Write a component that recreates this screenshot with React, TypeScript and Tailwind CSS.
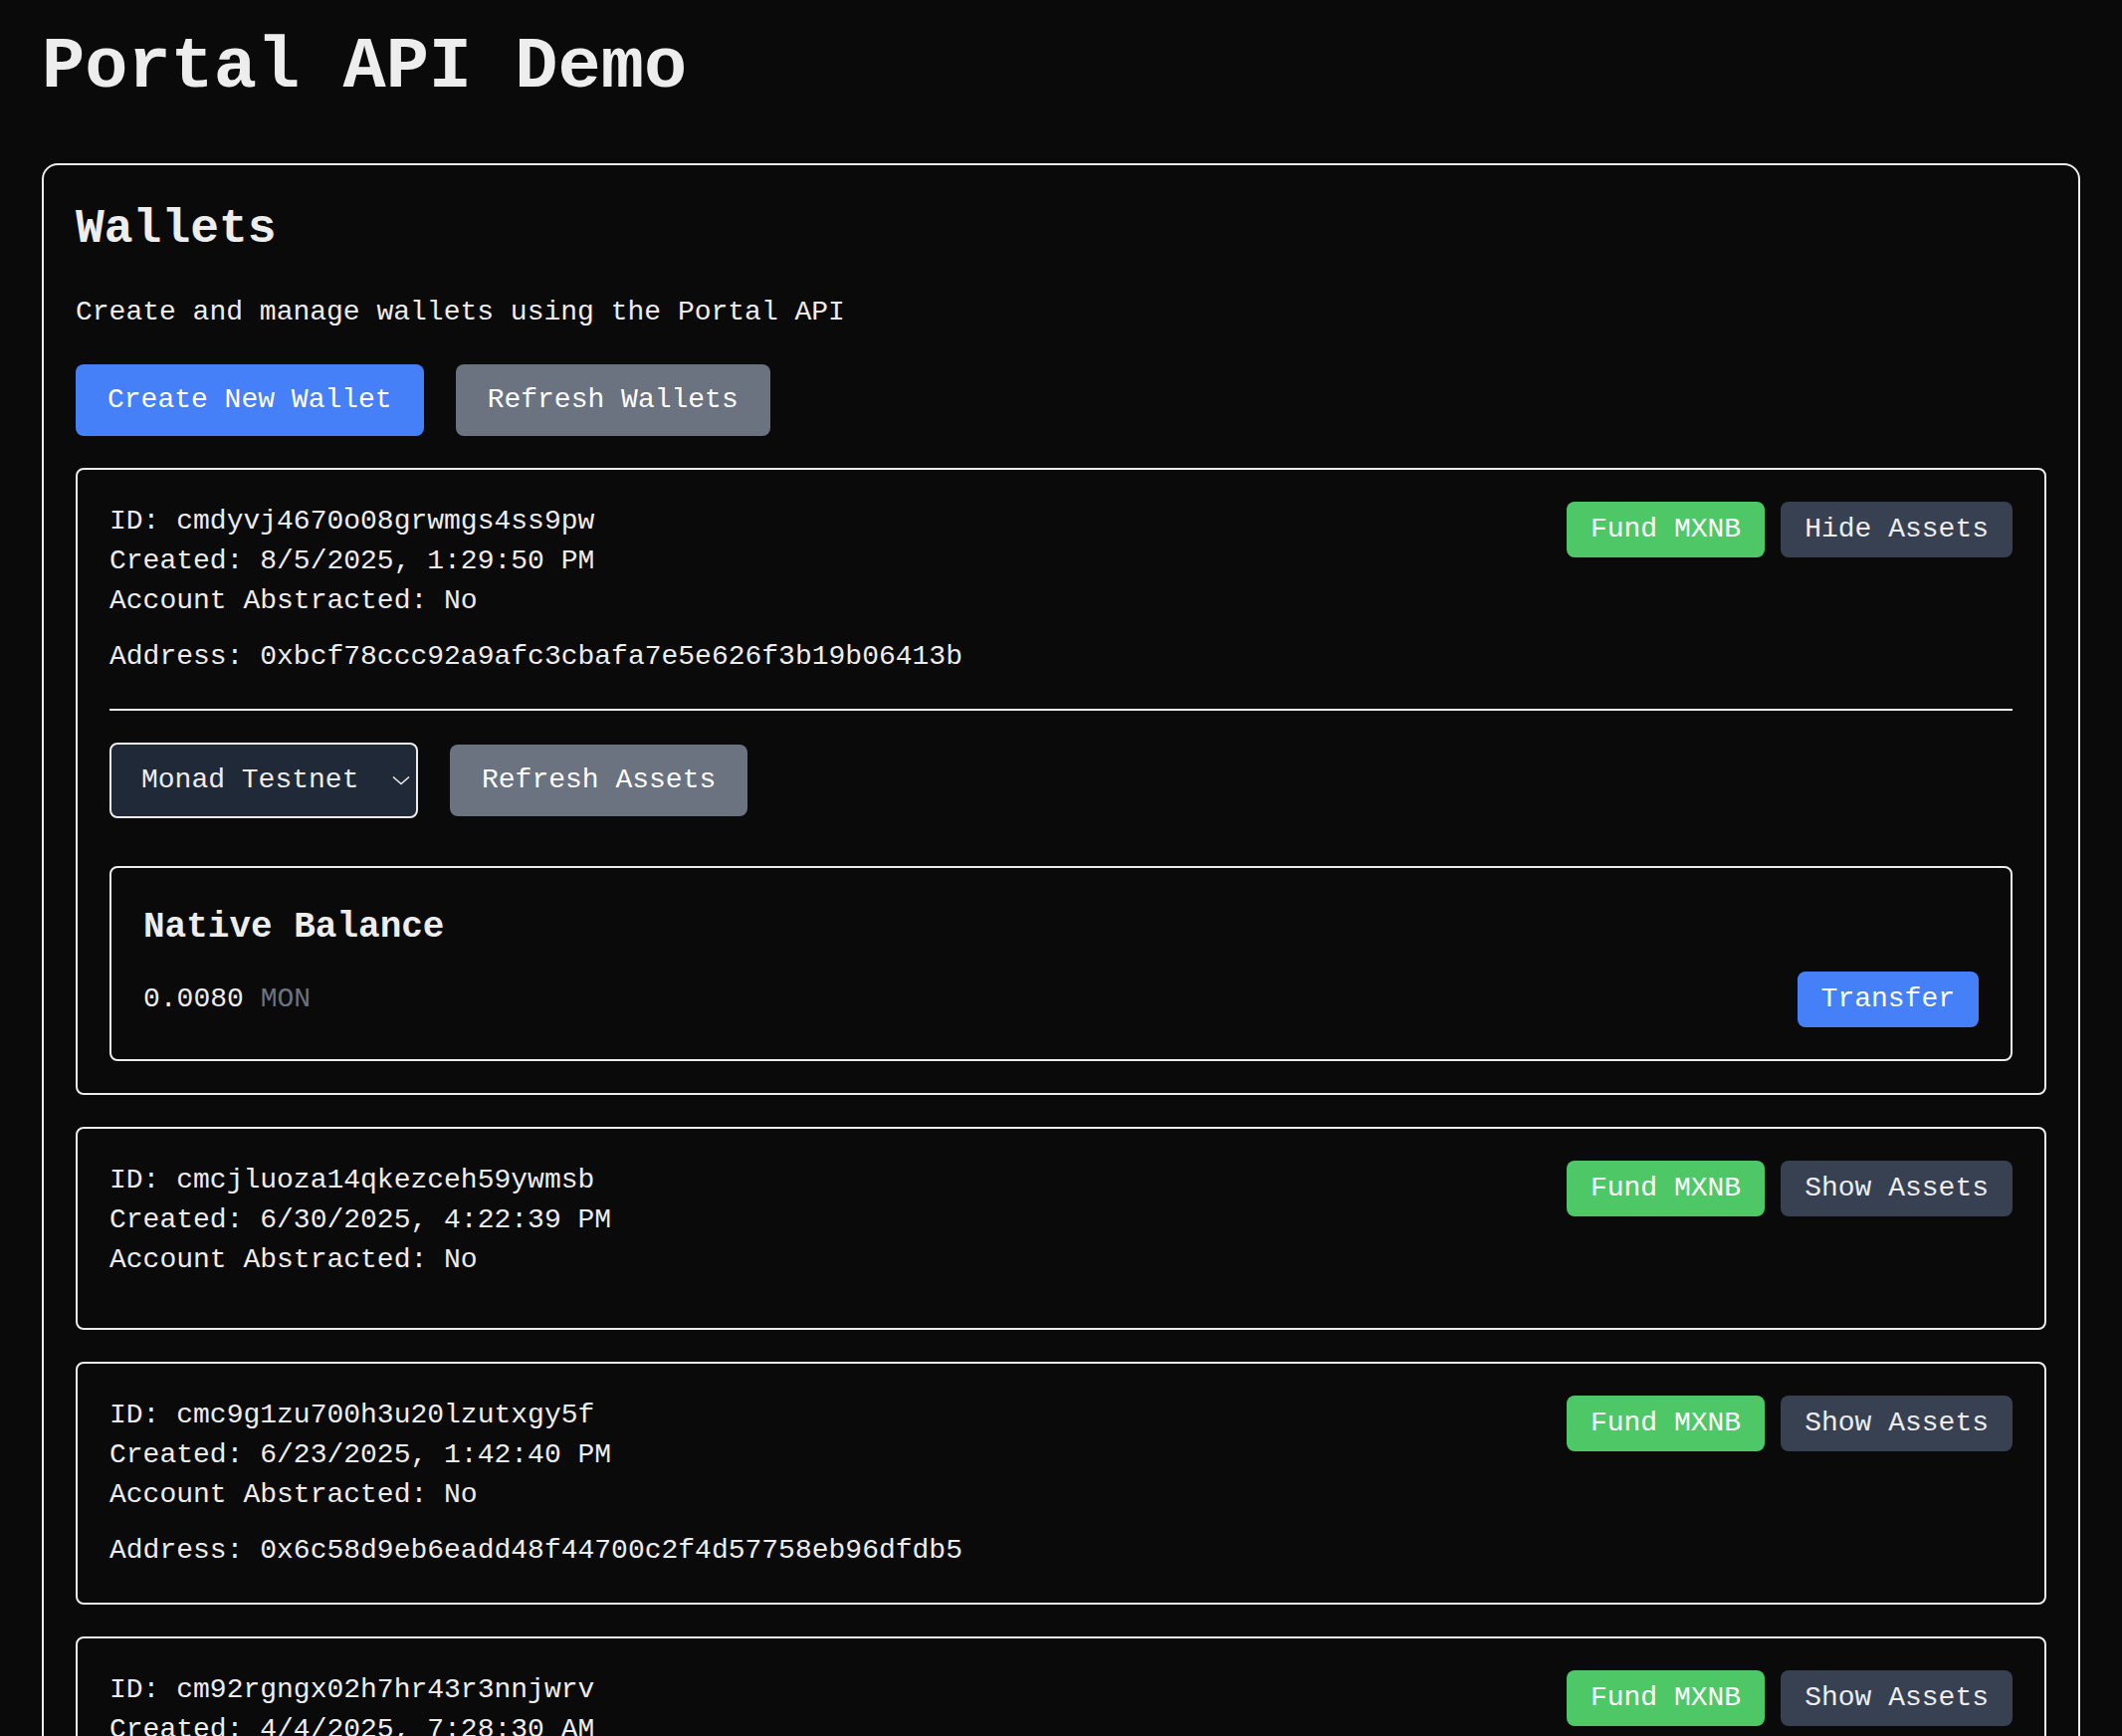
import { useState } from 'react';

interface Wallet {
  id: string;
  created: string;
  accountAbstracted: boolean;
  address?: string;
}

const wallets: Wallet[] = [
  {
    id: 'cmdyvj4670o08grwmgs4ss9pw',
    created: '8/5/2025, 1:29:50 PM',
    accountAbstracted: false,
    address: '0xbcf78ccc92a9afc3cbafa7e5e626f3b19b06413b',
  },
  {
    id: 'cmcjluoza14qkezceh59ywmsb',
    created: '6/30/2025, 4:22:39 PM',
    accountAbstracted: false,
  },
  {
    id: 'cmc9g1zu700h3u20lzutxgy5f',
    created: '6/23/2025, 1:42:40 PM',
    accountAbstracted: false,
    address: '0x6c58d9eb6eadd48f44700c2f4d57758eb96dfdb5',
  },
  {
    id: 'cm92rgngx02h7hr43r3nnjwrv',
    created: '4/4/2025, 7:28:30 AM',
    accountAbstracted: false,
  },
];

function AssetsPanel() {
  const [chain, setChain] = useState('monad');

  return (
    <div className="mt-[32px] border-t-2 border-[#ededed] pt-[32px]">
      <div className="mb-[48px] flex items-center gap-[32px]">
        <div className="relative">
          <select
            value={chain}
            onChange={(e) => setChain(e.target.value)}
            className="h-[76px] w-[310px] appearance-none rounded-[8px] border-2 border-[#ededed] bg-[#1f2937] pl-[30px] pr-[56px] text-[28px] leading-[40px] text-[#ededed] outline-none"
          >
            <option value="monad">Monad Testnet</option>
            <option value="sepolia">Sepolia</option>
          </select>
          {/* chevron */}
          <svg
            className="pointer-events-none absolute right-[7px] top-1/2 h-[20px] w-[20px] -translate-y-1/2"
            viewBox="0 0 20 20"
            fill="none"
            stroke="#ededed"
            strokeWidth="1.6"
          >
            <path d="M2 6.5l8 7 8-7" />
          </svg>
        </div>
        <button className="rounded-[8px] bg-[#6b7280] px-[32px] py-[16px] text-[28px] leading-[40px] text-white">
          Refresh Assets
        </button>
      </div>

      {/* Native balance */}
      <div className="rounded-[8px] border-2 border-[#ededed] p-[32px]">
        <h3 className="mb-[16px] text-[36px] font-bold leading-[56px]">Native Balance</h3>
        <div className="flex items-center justify-between">
          <p>
            0.0080 <span className="text-[#6b7280]">MON</span>
          </p>
          <button className="rounded-[8px] bg-[#4580f9] px-[24px] py-[8px] text-[28px] leading-[40px] text-white">
            Transfer
          </button>
        </div>
      </div>
    </div>
  );
}

function WalletCard({ wallet, expanded, onToggle }: { wallet: Wallet; expanded: boolean; onToggle: () => void }) {
  return (
    <div className="rounded-[8px] border-2 border-[#ededed] p-[32px]">
      <div className="flex items-start justify-between">
        <div>
          <p>ID: {wallet.id}</p>
          <p>Created: {wallet.created}</p>
          <p>Account Abstracted: {wallet.accountAbstracted ? 'Yes' : 'No'}</p>
          <div className="mt-[16px]">{wallet.address && <p>Address: {wallet.address}</p>}</div>
        </div>
        <div className="flex gap-[16px]">
          <button className="rounded-[8px] bg-[#4ec866] px-[24px] py-[8px] text-[28px] leading-[40px] text-white">
            Fund MXNB
          </button>
          <button
            onClick={onToggle}
            className="rounded-[8px] bg-[#374151] px-[24px] py-[8px] text-[28px] leading-[40px] text-[#ededed]"
          >
            {expanded ? 'Hide Assets' : 'Show Assets'}
          </button>
        </div>
      </div>
      {expanded && <AssetsPanel />}
    </div>
  );
}

export default function App() {
  const [openId, setOpenId] = useState<string | null>(wallets[0].id);

  return (
    <div className="min-h-screen bg-[#0a0a0a] font-['Liberation_Mono','DejaVu_Sans_Mono',monospace] text-[28px] leading-[40px] text-[#ededed]">
      <div className="mx-auto max-w-[2048px] pt-[28px] pb-[64px]">
        <h1 className="mb-[56px] text-[72px] font-bold leading-[80px]">Portal API Demo</h1>

        <div className="rounded-[16px] border-2 border-[#ededed] p-[32px]">
          <h2 className="mb-[32px] text-[48px] font-bold leading-[64px]">Wallets</h2>
          <p className="mb-[32px]">Create and manage wallets using the Portal API</p>

          <div className="mb-[32px] flex gap-[32px]">
            <button className="rounded-[8px] bg-[#4580f9] px-[32px] py-[16px] text-[28px] leading-[40px] text-white">
              Create New Wallet
            </button>
            <button className="rounded-[8px] bg-[#6b7280] px-[32px] py-[16px] text-[28px] leading-[40px] text-white">
              Refresh Wallets
            </button>
          </div>

          <div className="flex flex-col gap-[32px]">
            {wallets.map((w) => (
              <WalletCard
                key={w.id}
                wallet={w}
                expanded={openId === w.id}
                onToggle={() => setOpenId(openId === w.id ? null : w.id)}
              />
            ))}
          </div>
        </div>
      </div>
    </div>
  );
}
